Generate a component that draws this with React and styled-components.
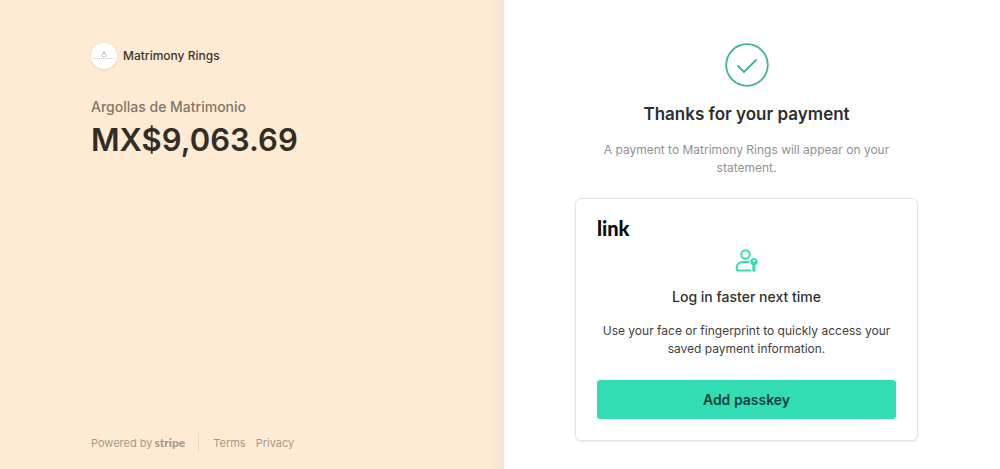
import React from "react";
import styled, { createGlobalStyle } from "styled-components";

const GlobalStyle = createGlobalStyle`
  *, *::before, *::after { box-sizing: border-box; }
  body {
    margin: 0;
    background: #ffffff;
    font-family: Inter, "Liberation Sans", sans-serif;
    -webkit-font-smoothing: antialiased;
  }
  h1, h2, p { margin: 0; }
`;

const Page = styled.div`
  display: grid;
  grid-template-columns: 50.4% 1fr;
  min-height: 100vh;
`;

const Summary = styled.section`
  display: flex;
  flex-direction: column;
  padding: 43px 24px 16px 91px;
  background: linear-gradient(to left, #f5e5d2, #ffebd4 16px);
`;

const Merchant = styled.header`
  display: flex;
  align-items: center;
  gap: 6px;
  color: #3b342d;
  font-size: 12px;
  font-weight: 500;
  line-height: 26px;
`;

const Avatar = styled.svg`
  width: 26px;
  height: 26px;
  border-radius: 50%;
  background: #ffffff;
  box-shadow: 0 1px 3px rgba(60, 40, 20, 0.14);
`;

const Product = styled.p`
  margin-top: 28px;
  color: #80766a;
  font-size: 14px;
  font-weight: 500;
  line-height: 20px;
`;

const Amount = styled.p`
  color: #332d27;
  font-size: 31px;
  font-weight: 600;
  line-height: 46px;
`;

const Footer = styled.footer`
  display: flex;
  align-items: center;
  margin-top: auto;
  color: #a6998a;
  font-size: 11px;
  line-height: 20px;
`;

const Powered = styled.a`
  display: flex;
  gap: 2px;
  padding-right: 13px;
  border-right: 1px solid #e9d8c4;
  color: inherit;
  text-decoration: none;
`;

const StripeMark = styled.span`
  font-family: Lato, sans-serif;
  font-size: 12px;
  font-weight: 900;
`;

const Links = styled.nav`
  display: flex;
  gap: 10px;
  padding-left: 14px;
`;

const FooterLink = styled.a`
  color: inherit;
  text-decoration: none;
`;

const Result = styled.main`
  display: flex;
  flex-direction: column;
  align-items: center;
  padding: 43px 82px 27px 71px;
  text-align: center;
`;

const Check = styled.svg`
  width: 44px;
  height: 44px;
`;

const Title = styled.h1`
  margin-top: 15px;
  color: #2e2e2e;
  font-size: 17px;
  font-weight: 600;
  line-height: 24px;
`;

const Note = styled.p`
  max-width: 300px;
  margin-top: 15px;
  color: #919191;
  font-size: 12px;
  line-height: 18px;
`;

const Card = styled.section`
  display: flex;
  flex-direction: column;
  align-items: center;
  width: 100%;
  max-width: 480px;
  margin-top: 21px;
  padding: 20px 21px 21px;
  border: 1px solid #e3e3e3;
  border-radius: 6px;
  box-shadow: 0 1px 2px rgba(0, 0, 0, 0.08);
`;

const LinkMark = styled.span`
  align-self: flex-start;
  color: #0c0c0c;
  font-family: Lato, sans-serif;
  font-size: 20px;
  font-weight: 900;
  line-height: 18px;
`;

const PasskeyIcon = styled.svg`
  width: 24px;
  height: 24px;
  margin-top: 12px;
`;

const CardTitle = styled.h2`
  margin-top: 14px;
  color: #303030;
  font-size: 14px;
  font-weight: 500;
  line-height: 20px;
`;

const CardText = styled.p`
  max-width: 300px;
  margin-top: 15px;
  color: #404040;
  font-size: 12px;
  line-height: 18px;
`;

const Button = styled.button`
  width: 100%;
  height: 39px;
  margin-top: 22px;
  padding: 0;
  border: 0;
  border-radius: 3px;
  background: #33ddb3;
  color: #12413f;
  font-family: inherit;
  font-size: 14px;
  font-weight: 600;
  cursor: pointer;
`;

export default function App() {
  return (
    <>
      <GlobalStyle />
      <Page>
        <Summary>
          <Merchant>
            <Avatar viewBox="0 0 26 26" fill="none" aria-hidden="true">
              <circle cx="13" cy="12" r="2" stroke="#aaa" strokeWidth="0.7" />
              <path d="M12 9h2l-1 1z" stroke="#aaa" strokeWidth="0.6" />
              <path d="M2 15.500h22" stroke="#ccc" strokeWidth="1.2" strokeDasharray="1.2 0.8" />
            </Avatar>
            <span>Matrimony Rings</span>
          </Merchant>
          <Product>Argollas de Matrimonio</Product>
          <Amount>MX$9,063.69</Amount>
          <Footer>
            <Powered href="#stripe">
              <span>Powered by</span>
              <StripeMark>stripe</StripeMark>
            </Powered>
            <Links>
              <FooterLink href="#terms">Terms</FooterLink>
              <FooterLink href="#privacy">Privacy</FooterLink>
            </Links>
          </Footer>
        </Summary>
        <Result>
          <Check viewBox="0 0 44 44" fill="none" stroke="#3db58a" aria-hidden="true">
            <circle cx="22" cy="22" r="20.8" strokeWidth="1.8" />
            <path d="M13 23l6 6L31 17" strokeWidth="1.8" strokeLinecap="round" strokeLinejoin="round" />
          </Check>
          <Title>Thanks for your payment</Title>
          <Note>A payment to Matrimony Rings will appear on your statement.</Note>
          <Card>
            <LinkMark>link</LinkMark>
            <PasskeyIcon viewBox="0 0 24 24" fill="none" aria-hidden="true">
              <g stroke="#33ddb3" strokeWidth="2" strokeLinecap="round" strokeLinejoin="round">
                <circle cx="10.5" cy="5.5" r="4.2" />
                <path d="M13.500 13H8c-3.500 0-6.300 2.300-6.300 5.500v1.200q0 1.800 1.800 1.800h11.500" />
              </g>
              <path
                fill="#33ddb3"
                fillRule="evenodd"
                d="M19 9a3.700 3.700 0 0 0-1.700 7v5.500l1.700 1.700 2-2-1.100-1.400 1.100-1.300-1-1.300.8-1.300A3.700 3.700 0 0 0 19 9zm0 1.800a1.100 1.100 0 1 1 0 2.200 1.100 1.100 0 0 1 0-2.200z"
              />
            </PasskeyIcon>
            <CardTitle>Log in faster next time</CardTitle>
            <CardText>Use your face or fingerprint to quickly access your saved payment information.</CardText>
            <Button type="button">Add passkey</Button>
          </Card>
        </Result>
      </Page>
    </>
  );
}
